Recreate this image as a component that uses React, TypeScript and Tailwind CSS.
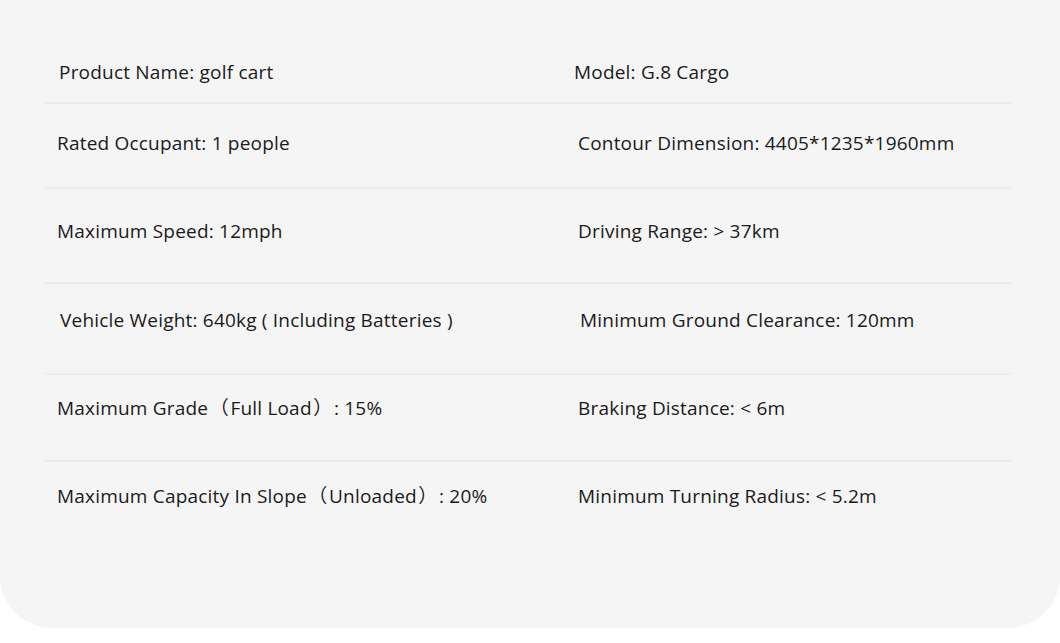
import type { ReactNode } from 'react';

const P = ({ children }: { children: ReactNode }) => <span className="px-[1.5px]">{children}</span>;

const rows: { h: string; pt: string; left: ReactNode; right: string; lx: string; rx: string }[] = [
  { h: 'h-[104px]', pt: 'pt-[60px]', left: 'Product Name: golf cart', right: 'Model: G.8 Cargo', lx: 'pl-[14px]', rx: 'pl-[9px]' },
  { h: 'h-[85px]', pt: 'pt-[27px]', left: 'Rated Occupant: 1 people', right: 'Contour Dimension: 4405*1235*1960mm', lx: 'pl-[12px]', rx: 'pl-[13px]' },
  { h: 'h-[95px]', pt: 'pt-[30px]', left: 'Maximum Speed: 12mph', right: 'Driving Range: > 37km', lx: 'pl-[12px]', rx: 'pl-[13px]' },
  { h: 'h-[91px]', pt: 'pt-[24px]', left: 'Vehicle Weight: 640kg ( Including Batteries )', right: 'Minimum Ground Clearance: 120mm', lx: 'pl-[15px]', rx: 'pl-[15px]' },
  {
    h: 'h-[87px]', pt: 'pt-[21px]',
    left: <>Maximum Grade<P>（</P>Full Load<P>）</P>: 15%</>,
    right: 'Braking Distance: < 6m', lx: 'pl-[12px]', rx: 'pl-[13px]',
  },
  {
    h: 'h-[166px]', pt: 'pt-[22px]',
    left: <>Maximum Capacity In Slope<P>（</P>Unloaded<P>）</P>: 20%</>,
    right: 'Minimum Turning Radius: < 5.2m', lx: 'pl-[12px]', rx: 'pl-[13px]',
  },
];

export default function App() {
  return (
    <div className="min-h-[643px] w-[1060px] bg-white">
      <div className="h-[628px] w-full rounded-b-[52px] bg-[#f5f5f5] px-[45px] font-['Open_Sans','Noto_Sans_CJK_SC',sans-serif] text-[19px] leading-[24px] tracking-[0.2px] text-[#1a1a1a]">
        {rows.map((r, i) => (
          <div
            key={i}
            className={`${r.h} ${r.pt} ${i < rows.length - 1 ? 'border-b-2 border-[#ececec]' : ''} flex w-[966px]`}
          >
            <div className={`${r.lx} w-[520px] shrink-0 whitespace-nowrap`}>{r.left}</div>
            <div className={`${r.rx} whitespace-nowrap`}>{r.right}</div>
          </div>
        ))}
      </div>
    </div>
  );
}
